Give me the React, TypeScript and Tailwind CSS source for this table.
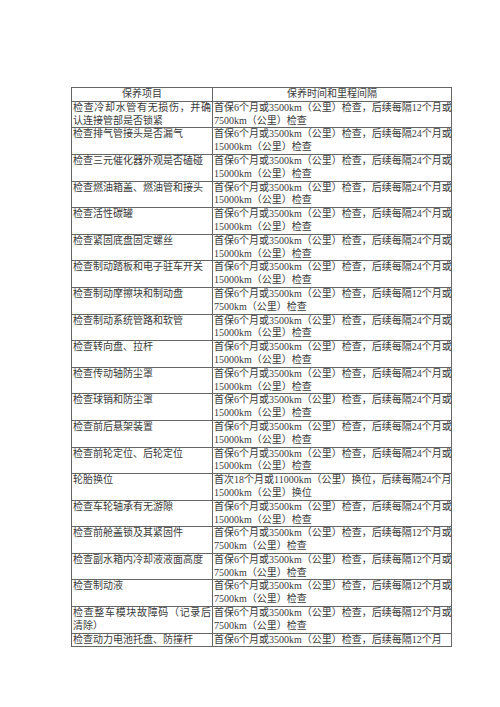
import React from "react";

type Row = { item: string[]; interval: string[] };

const a24 = ["首保6个月或3500km（公里）检查，后续每隔24个月或", "15000km（公里）检查"];
const a12 = ["首保6个月或3500km（公里）检查，后续每隔12个月或", "7500km（公里）检查"];

const ROWS: Row[] = [
  { item: ["检查冷却水管有无损伤，并确", "认连接管部是否锁紧"], interval: a12 },
  { item: ["检查排气管接头是否漏气"], interval: a24 },
  { item: ["检查三元催化器外观是否磕碰"], interval: a24 },
  { item: ["检查燃油箱盖、燃油管和接头"], interval: a24 },
  { item: ["检查活性碳罐"], interval: a24 },
  { item: ["检查紧固底盘固定螺丝"], interval: a24 },
  { item: ["检查制动踏板和电子驻车开关"], interval: a24 },
  { item: ["检查制动摩擦块和制动盘"], interval: a12 },
  { item: ["检查制动系统管路和软管"], interval: a24 },
  { item: ["检查转向盘、拉杆"], interval: a24 },
  { item: ["检查传动轴防尘罩"], interval: a24 },
  { item: ["检查球销和防尘罩"], interval: a24 },
  { item: ["检查前后悬架装置"], interval: a24 },
  { item: ["检查前轮定位、后轮定位"], interval: a24 },
  {
    item: ["轮胎换位"],
    interval: ["首次18个月或11000km（公里）换位，后续每隔24个月", "15000km（公里）换位"],
  },
  { item: ["检查车轮轴承有无游隙"], interval: a24 },
  { item: ["检查前舱盖锁及其紧固件"], interval: a12 },
  { item: ["检查副水箱内冷却液液面高度"], interval: a12 },
  { item: ["检查制动液"], interval: a12 },
  { item: ["检查整车模块故障码（记录后", "清除）"], interval: a12 },
  { item: ["检查动力电池托盘、防撞杆"], interval: ["首保6个月或3500km（公里）检查，后续每隔12个月"] },
];

const Cell: React.FC<{ lines: string[] }> = ({ lines }) => (
  <td className="border border-[#666] align-top px-[1px] py-0">
    {lines.map((l, i) => (
      <div
        key={i}
        className={
          i < lines.length - 1
            ? "whitespace-nowrap leading-[12.8px] text-justify [text-align-last:justify]"
            : "whitespace-nowrap leading-[12.8px]"
        }
      >
        {l}
      </div>
    ))}
  </td>
);

export default function App() {
  return (
    <div className="min-h-[707px] bg-white pt-[87px] pl-[71px]">
      <table
        className="border-collapse table-fixed w-[380px] text-[10px] text-[#3a3a3a]"
        style={{ fontFamily: '"Liberation Serif", "Noto Sans CJK SC", serif' }}
      >
        <colgroup>
          <col className="w-[141px]" />
          <col className="w-[239px]" />
        </colgroup>
        <thead>
          <tr>
            <th className="border border-[#666] font-normal leading-[12.8px] text-center">保养项目</th>
            <th className="border border-[#666] font-normal leading-[12.8px] text-center">保养时间和里程间隔</th>
          </tr>
        </thead>
        <tbody>
          {ROWS.map((r, i) => (
            <tr key={i}>
              <Cell lines={r.item} />
              <Cell lines={r.interval} />
            </tr>
          ))}
        </tbody>
      </table>
    </div>
  );
}
